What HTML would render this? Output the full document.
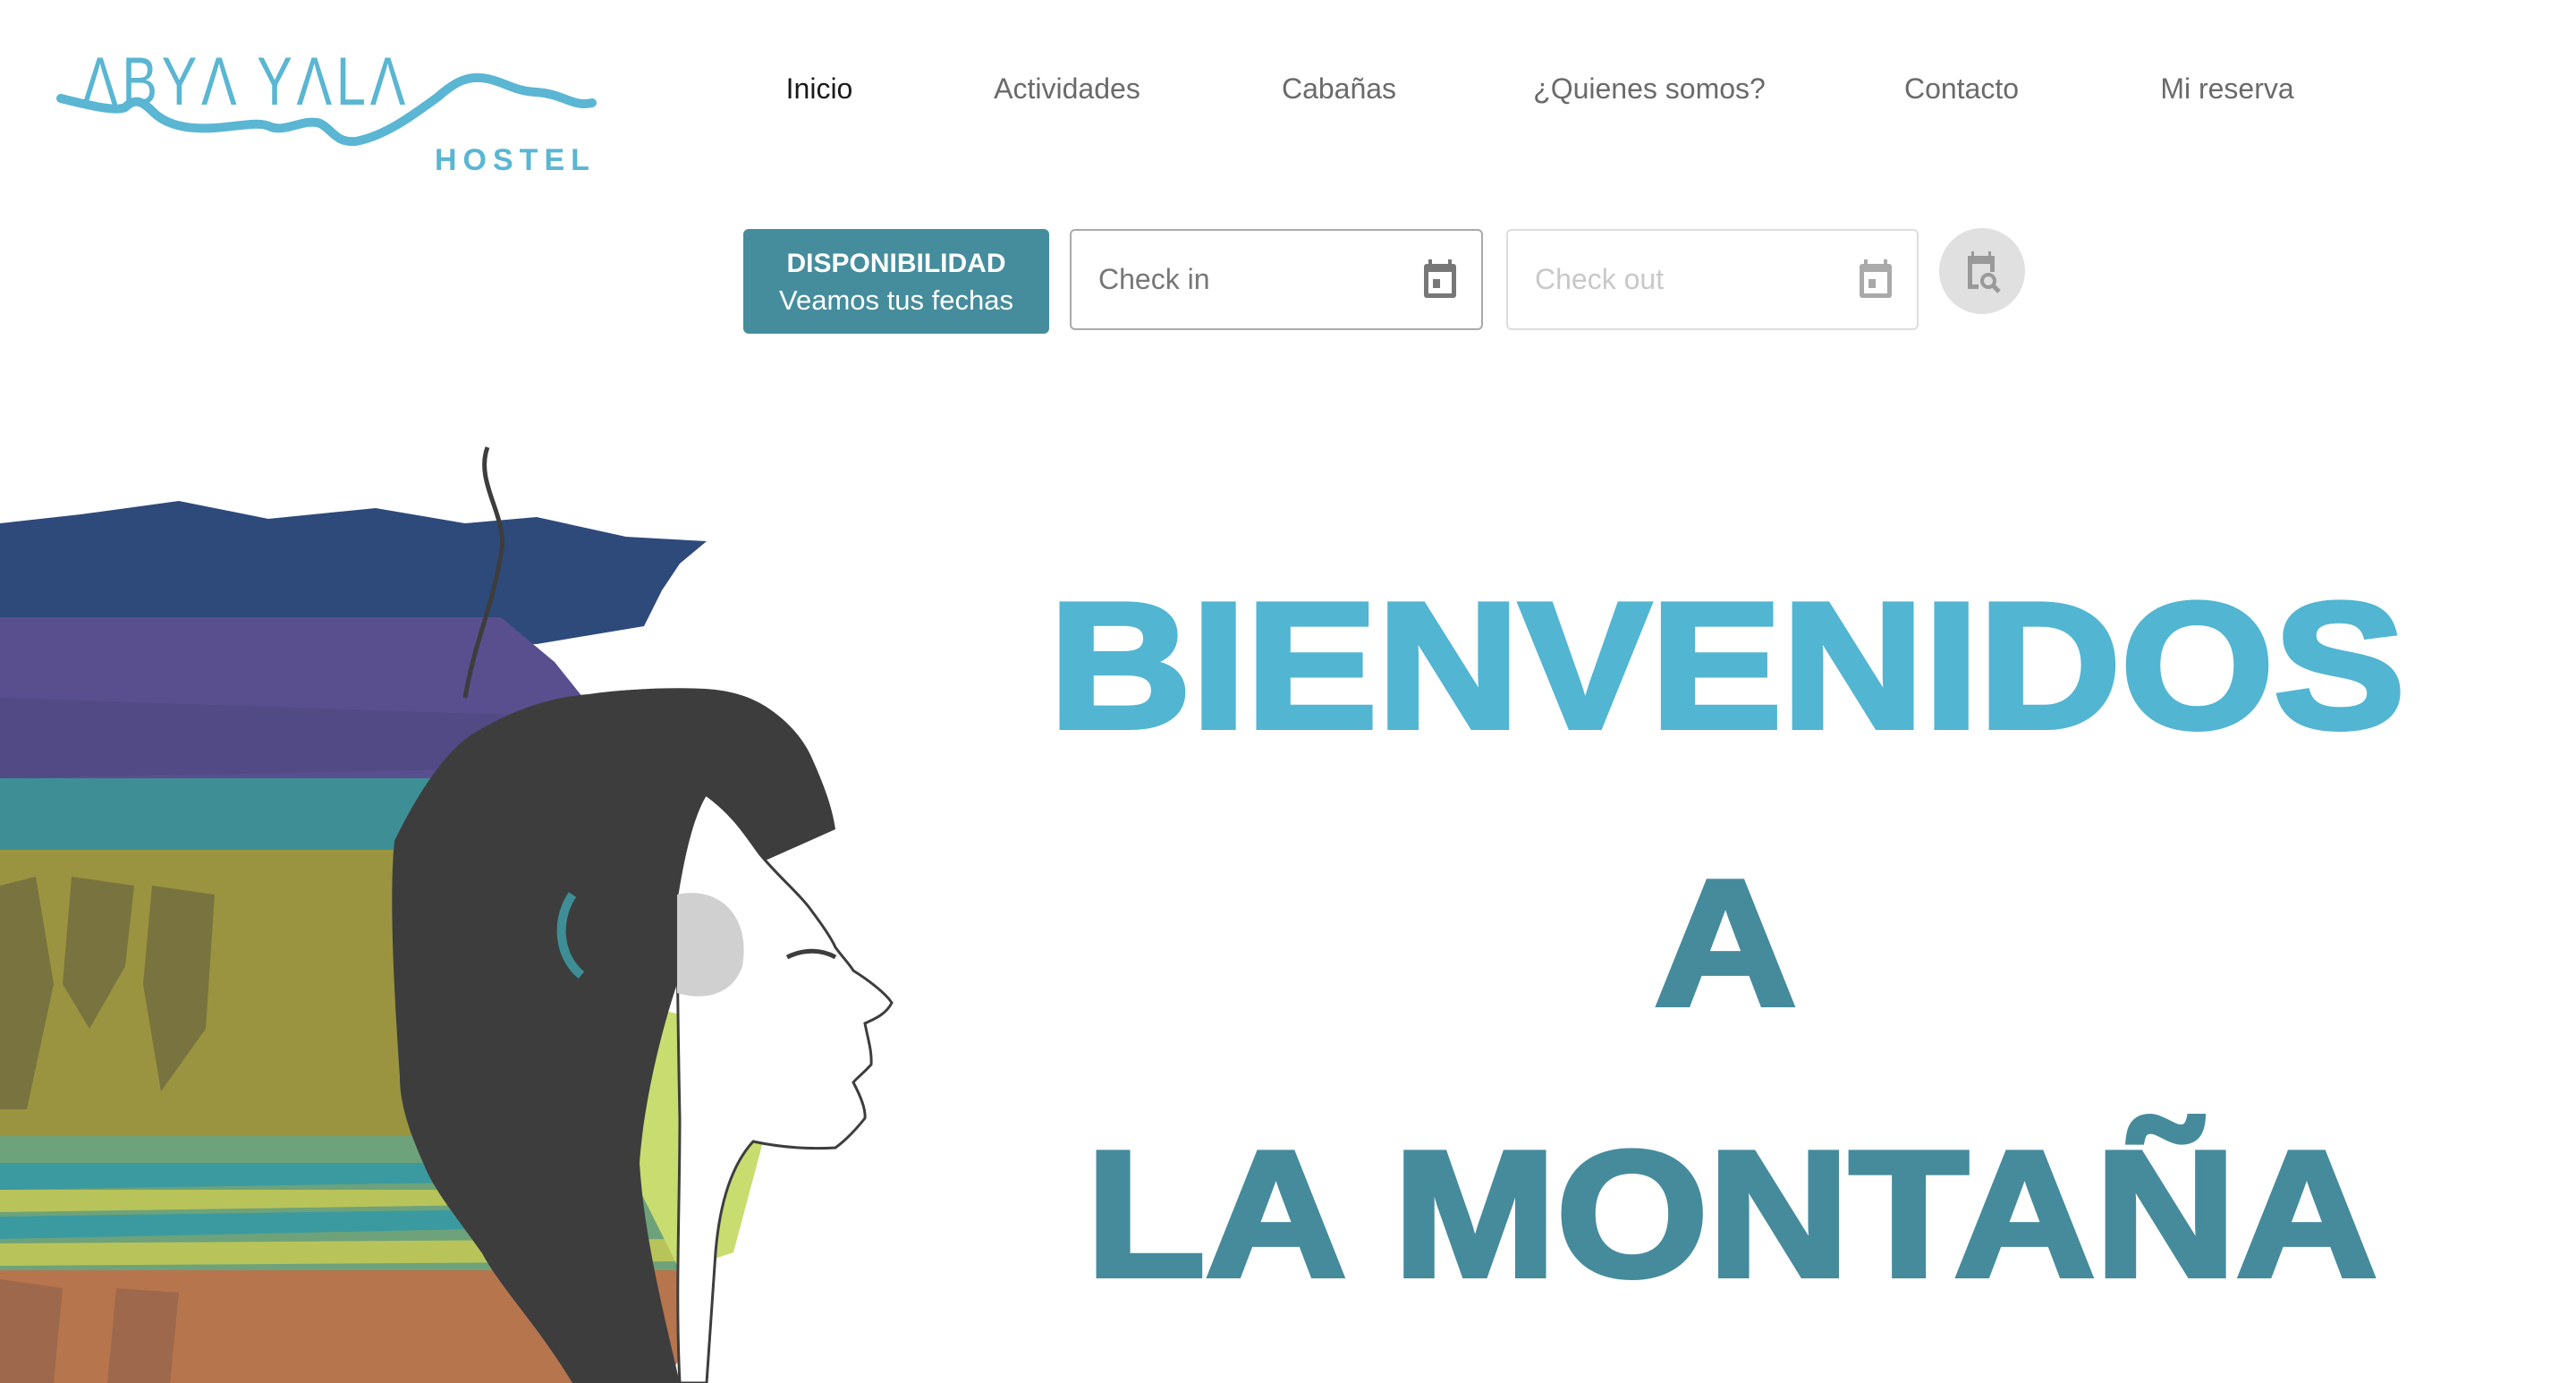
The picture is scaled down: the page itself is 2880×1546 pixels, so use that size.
<!DOCTYPE html>
<html><head><meta charset="utf-8"><style>
html,body{margin:0;padding:0;background:#fff;width:2880px;height:1546px;overflow:hidden;position:relative;font-family:"Liberation Sans",sans-serif}
.nav{position:absolute;top:81px;font-size:32px;color:#6a6a6a;transform:translateX(-50%);white-space:nowrap}
.h{position:absolute;font-weight:bold;font-size:200px;line-height:1;white-space:nowrap;-webkit-text-stroke:6px currentColor}
.box{position:absolute;top:256px;height:113px;box-sizing:border-box;border-radius:6px}
</style></head><body>
<svg style="position:absolute;left:0;top:0" width="720" height="220" viewBox="0 0 720 220">
<text x="92" y="117" font-family="Liberation Sans" font-size="76" fill="#5ab6d3" letter-spacing="6" textLength="366" lengthAdjust="spacingAndGlyphs">ΛBYΛ YΛLΛ</text>
<path d="M68,110 C100,118 130,125 140,120 C150,110 158,112 170,124 C185,140 210,145 240,143 C270,141 290,135 303,142 C320,148 340,132 358,138 C372,145 375,160 398,158 C430,152 460,130 490,108 C510,90 525,84 545,88 C565,92 575,102 600,103 C630,105 640,120 662,115" fill="none" stroke="#5ab6d3" stroke-width="10" stroke-linecap="round"/>
<text x="486" y="190" font-family="Liberation Sans" font-weight="bold" font-size="34" fill="#5ab6d3" letter-spacing="7">HOSTEL</text>
</svg>
<span class="nav" style="left:916px;color:#1a1a1a">Inicio</span>
<span class="nav" style="left:1193px">Actividades</span>
<span class="nav" style="left:1497px">Cabañas</span>
<span class="nav" style="left:1844px">¿Quienes somos?</span>
<span class="nav" style="left:2193px">Contacto</span>
<span class="nav" style="left:2490px">Mi reserva</span>

<div class="box" style="left:831px;width:342px;height:117px;background:#458d9c;color:#fff;text-align:center;padding-top:22px">
<div style="font-weight:bold;font-size:30px">DISPONIBILIDAD</div>
<div style="font-size:31px;margin-top:6px">Veamos tus fechas</div></div>
<div class="box" style="left:1196px;width:462px;border:2px solid #aaa;color:#777;font-size:32px;padding:36px 0 0 30px">Check in
<svg style="position:absolute;right:26px;top:32px" width="40" height="44" viewBox="0 0 40 44"><rect x="7" y="0" width="4" height="8" fill="#777"/><rect x="29" y="0" width="4" height="8" fill="#777"/><rect x="2" y="5" width="36" height="38" rx="3" fill="#777"/><rect x="7" y="14" width="26" height="24" fill="#fff"/><rect x="12" y="22" width="8" height="10" fill="#777"/></svg></div>
<div class="box" style="left:1684px;width:461px;border:2px solid #ddd;color:#c8c8c8;font-size:32px;padding:36px 0 0 30px">Check out
<svg style="position:absolute;right:26px;top:32px" width="40" height="44" viewBox="0 0 40 44"><rect x="7" y="0" width="4" height="8" fill="#aaa"/><rect x="29" y="0" width="4" height="8" fill="#aaa"/><rect x="2" y="5" width="36" height="38" rx="3" fill="#aaa"/><rect x="7" y="14" width="26" height="24" fill="#fff"/><rect x="12" y="22" width="8" height="10" fill="#aaa"/></svg></div>
<svg style="position:absolute;left:2168px;top:255px" width="96" height="96" viewBox="0 0 96 96"><circle cx="48" cy="48" r="48" fill="#e0e0e0"/>
<rect x="36" y="26" width="3" height="8" fill="#999"/><rect x="55" y="26" width="3" height="8" fill="#999"/>
<rect x="32" y="31" width="30" height="9" fill="#999"/><rect x="32" y="31" width="5" height="37" fill="#999"/><rect x="32" y="63" width="12" height="5" fill="#999"/><rect x="57" y="31" width="5" height="18" fill="#999"/>
<circle cx="55" cy="59" r="7" fill="none" stroke="#999" stroke-width="4"/><path d="M60,64 L67,71" stroke="#999" stroke-width="5"/></svg>

<div class="h" style="top:645px;left:1931px;color:#52b5d2;transform:translateX(-50%) scaleX(1.1)">BIENVENIDOS</div>
<div class="h" style="top:955px;left:1929px;color:#458b9c;transform:translateX(-50%) scaleX(1.1)">A</div>
<div class="h" style="top:1258px;left:1936px;color:#458b9c;transform:translateX(-50%) scaleX(1.092)">LA MONTAÑA</div>

<svg style="position:absolute;left:0;top:480px" width="1020" height="1066" viewBox="0 480 1020 1066">
<path d="M0,585 L90,575 L200,560 L300,580 L420,568 L520,585 L600,578 L700,600 L790,605 L760,630 L740,660 L720,700 L600,720 L0,720 Z" fill="#2e4a7a"/>
<path d="M0,690 L560,690 L620,740 L660,790 L600,860 L500,890 L0,890 Z" fill="#5a4f8e"/>
<path d="M0,780 L600,800 L520,860 L0,870 Z" fill="#514a85"/>
<path d="M0,870 L500,870 L520,930 L480,960 L0,960 Z" fill="#3e8f95"/>
<path d="M0,950 L480,950 L520,1000 L540,1270 L0,1270 Z" fill="#9a9440"/>
<path d="M0,990 L40,980 L60,1100 L30,1240 L0,1240 Z M80,980 L150,990 L140,1080 L100,1150 L70,1100 Z M170,990 L240,1000 L230,1150 L180,1220 L160,1100 Z" fill="#6f6a3e" opacity=".8"/>
<path d="M0,1270 L560,1270 L700,1300 L800,1340 L780,1420 L0,1420 Z" fill="#6ea27a"/>
<path d="M0,1300 L600,1300 L640,1320 L0,1330 Z M0,1360 L700,1350 L720,1370 L0,1385 Z" fill="#3b9aa0"/>
<path d="M0,1330 L620,1330 L680,1345 L0,1355 Z M0,1390 L760,1385 L760,1410 L0,1415 Z" fill="#b8c45a"/>
<path d="M700,1120 L830,1150 L860,1250 L820,1400 L760,1420 L700,1300 Z" fill="#c8dc70"/>
<path d="M0,1420 L760,1420 L790,1480 L740,1546 L0,1546 Z" fill="#b7754e"/>
<path d="M0,1430 L70,1440 L60,1546 L0,1546 Z M130,1440 L200,1445 L190,1546 L120,1546 Z" fill="#92634a" opacity=".7"/>
<path d="M545,500 C530,540 570,580 560,620 C550,680 530,720 520,780" fill="none" stroke="#3d3d3d" stroke-width="5"/>
<path d="M441,940 C470,880 500,840 526,822 C570,795 610,780 658,776 C700,770 750,768 789,770 C820,772 840,780 855,789 C880,805 898,825 908,848 C920,875 930,900 934,927 L860,960 L757,1000 L757,1100 C740,1150 720,1230 715,1300 C720,1380 740,1460 760,1546 L640,1546 C600,1480 560,1440 539,1401 C510,1360 485,1330 474,1302 C455,1260 447,1230 447,1204 C440,1100 435,1000 441,940 Z" fill="#3d3d3d"/>
<path d="M789,888 C820,910 835,935 849,954 C870,980 895,1000 908,1019 C920,1035 930,1050 934,1059 C942,1070 950,1078 954,1085 C970,1095 990,1110 997,1121 C990,1135 975,1140 967,1144 C970,1160 975,1175 974,1190 C965,1200 958,1205 954,1210 C962,1225 968,1240 967,1250 C955,1265 945,1275 934,1283 C900,1285 870,1282 842,1276 C820,1300 805,1340 800,1400 L790,1546 L760,1546 C755,1450 760,1350 760,1250 C758,1150 757,1050 757,1000 C765,950 775,910 789,888 Z" fill="#fff" stroke="#3d3d3d" stroke-width="3"/>
<path d="M757,1000 C800,990 840,1020 830,1080 C820,1110 790,1120 757,1110 Z" fill="#d0d0d0"/>
<path d="M880,1070 C900,1060 920,1062 934,1070" fill="none" stroke="#3d3d3d" stroke-width="5"/>
<path d="M640,1000 C620,1030 625,1070 650,1090" fill="none" stroke="#3e8f95" stroke-width="10"/>
<path d="M650,1160 C640,1220 640,1260 650,1300" fill="none" stroke="#3d3d3d" stroke-width="4"/>
</svg>
</body></html>
